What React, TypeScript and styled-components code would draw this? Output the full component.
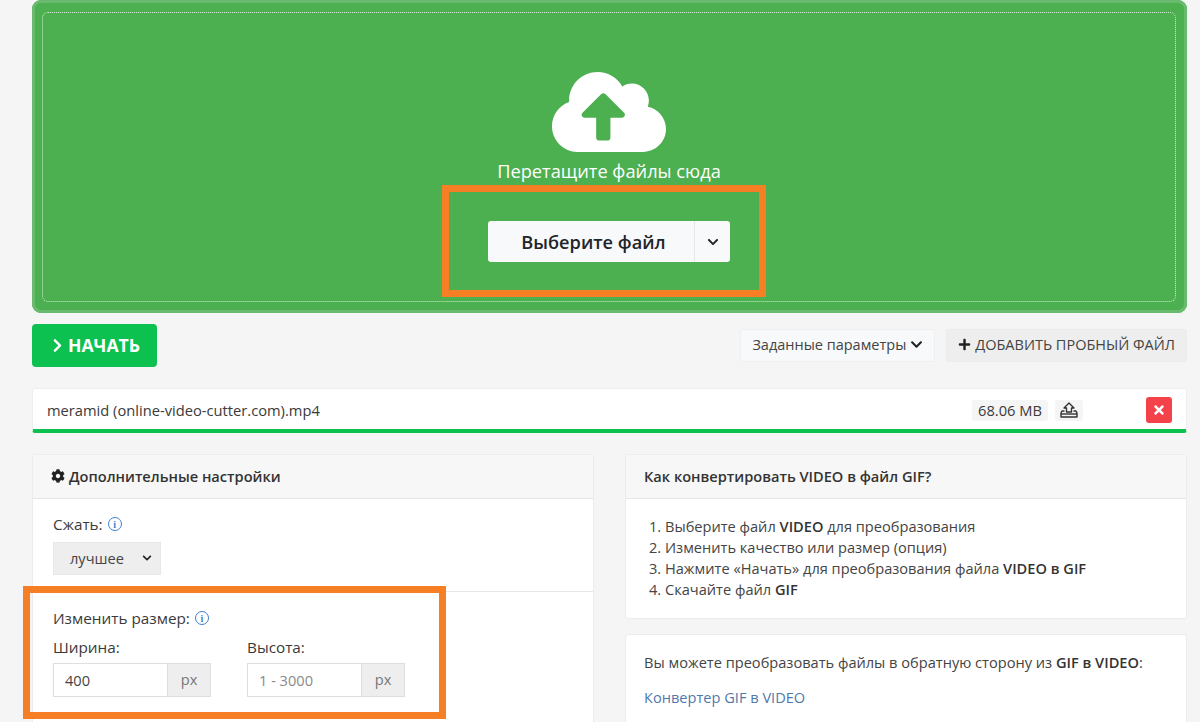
import React from 'react';
import styled, { createGlobalStyle } from 'styled-components';
import { FaChevronDown, FaChevronRight, FaCloudUploadAlt, FaCog, FaPlus, FaTimes } from 'react-icons/fa';

const GlobalStyle = createGlobalStyle`
  html, body {
    margin: 0;
    padding: 0;
    height: 722px;
    overflow: hidden;
    background: #f5f5f5;
    font-family: "Open Sans", "Liberation Sans", sans-serif;
    font-size: 14.6px;
    color: #3a3a3a;
  }
  * { box-sizing: border-box; }
`;

const Page = styled.div`
  position: relative;
  height: 722px;
  overflow: hidden;
  padding: 0 13px 0 32px;
`;

const DropZone = styled.section`
  height: 313px;
  padding: 12px 11px 11px 10px;
  background: #4caf50;
  border-radius: 9px;
  box-shadow: inset 0 0 0 3px #69b96f;
`;

const DropInner = styled.div`
  height: 100%;
  display: flex;
  flex-direction: column;
  align-items: center;
  padding-top: 53px;
  border: 1px dotted #d5ecd6;
  border-radius: 6px;
  color: #fff;
`;

const CloudIcon = styled(FaCloudUploadAlt)`
  font-size: 114px;
  height: 92px;
  color: #fff;
`;

const DropText = styled.div`
  margin-top: 1px;
  font-size: 18.25px;
  line-height: 24px;
`;

const PickGroup = styled.div`
  display: flex;
  height: 41px;
  margin-top: 38px;
  background: #f8f9fa;
  border-radius: 3px;
  color: #212529;
`;

const PickMain = styled.div`
  width: 207px;
  display: flex;
  align-items: center;
  justify-content: center;
  padding-left: 5px;
  font-size: 18.2px;
  font-weight: 600;
  border-right: 1px solid #e4e6e8;
`;

const PickCaret = styled.div`
  flex: 1;
  width: 35px;
  display: flex;
  align-items: center;
  justify-content: center;
  font-size: 12px;
`;

const ActionRow = styled.div`
  display: flex;
  align-items: center;
  margin-top: 11px;
  height: 43px;
  gap: 11px;
`;

const StartButton = styled.div`
  width: 125px;
  height: 43px;
  margin-right: auto;
  display: flex;
  align-items: center;
  gap: 4px;
  padding-left: 18px;
  padding-bottom: 1px;
  background: #0cc14f;
  border-radius: 4px;
  color: #fff;
  font-size: 17.6px;
  font-weight: 700;

  svg { font-size: 15px; margin-top: 1px; margin-right: -1px; }
`;

const GhostButton = styled.div<{ $tone: 'light' | 'grey' }>`
  height: 33px;
  display: flex;
  align-items: center;
  gap: 4px;
  padding: 0 11px 2px;
  border: 1px solid ${({ $tone }) => ($tone === 'light' ? '#eeeff0' : '#ececec')};
  border-radius: 3px;
  background: ${({ $tone }) => ($tone === 'light' ? '#f8f9fa' : '#eeeeee')};
  font-size: 14.5px;
  color: #444;
  white-space: nowrap;

  svg { font-size: 13px; color: #222; }
`;

const FileRow = styled.div`
  height: 45px;
  margin-top: 21px;
  display: flex;
  align-items: center;
  padding: 2px 14px 0 14px;
  background: #fff;
  border: 1px solid #eee;
  border-bottom: 4px solid #0cc14f;
  border-radius: 3px;
  font-size: 14.7px;
`;

const FileName = styled.div`
  margin-right: auto;
`;

const SizeTag = styled.div`
  height: 21px;
  padding: 0 6px;
  display: flex;
  align-items: center;
  background: #f5f5f5;
  border-radius: 3px;
`;

const UploadTag = styled.div`
  width: 28px;
  height: 21px;
  margin-left: 7px;
  display: flex;
  align-items: center;
  justify-content: center;
  background: #f5f5f5;
  border-radius: 3px;

  svg { width: 18px; height: 16px; }
`;

const RemoveButton = styled.div`
  width: 26px;
  height: 26px;
  margin-left: 63px;
  display: flex;
  align-items: center;
  justify-content: center;
  background: #f4424b;
  border-radius: 3px;
  color: #fff;
  font-size: 14px;
`;

const Columns = styled.div`
  display: grid;
  grid-template-columns: 562px 562px;
  gap: 31px;
  margin-top: 21px;
`;

const Column = styled.div`
  display: flex;
  flex-direction: column;
  gap: 15px;
`;

const Card = styled.div<{ $height: number }>`
  height: ${({ $height }) => $height}px;
  background: #fff;
  border: 1px solid #ececec;
  border-radius: 3px;
`;

const CardHeader = styled.div`
  height: 44px;
  display: flex;
  align-items: center;
  gap: 4px;
  padding: 0 18px 2px;
  background: #f7f7f7;
  border-bottom: 1px solid #e6e6e6;
  font-weight: 600;
  color: #333;

  svg { font-size: 14px; color: #222; }
`;

const SettingBlock = styled.div<{ $divided?: boolean }>`
  padding: ${({ $divided }) => ($divided ? '16px 20px 0' : '15px 20px 16px')};
  border-top: ${({ $divided }) => ($divided ? '1px solid #e6e6e6' : 'none')};
`;

const FieldLabel = styled.div`
  display: flex;
  align-items: center;
  gap: 5px;
  height: 20px;
  font-size: 15.3px;
  color: #3a3a3a;
`;

const InfoIcon = styled.span`
  width: 14px;
  height: 14px;
  display: inline-flex;
  align-items: center;
  justify-content: center;
  border: 1.5px solid #3f7fd0;
  border-radius: 50%;
  color: #3f7fd0;
  font-family: "Liberation Serif", serif;
  font-size: 10px;
  font-weight: 700;
`;

const FakeSelect = styled.div`
  width: 108px;
  height: 33px;
  margin-top: 8px;
  display: flex;
  align-items: center;
  justify-content: space-between;
  padding: 0 4px 1px 16px;
  background: #eeeeee;
  border: 1px solid #e8e8e8;
  color: #444;

  svg { font-size: 10px; color: #222; margin-right: 4px; }
`;

const SizeFields = styled.div`
  display: flex;
  gap: 36px;
  margin-top: 9px;
`;

const SizeField = styled.div`
  width: 158px;
`;

const InputGroup = styled.div`
  display: flex;
  height: 34px;
  margin-top: 6px;
  border: 1px solid #dedede;
`;

const InputValue = styled.div<{ $placeholder?: boolean }>`
  flex: 1;
  display: flex;
  align-items: center;
  padding-left: 11px;
  color: ${({ $placeholder }) => ($placeholder ? '#8a8a8a' : '#444')};
`;

const InputUnit = styled.div`
  width: 43px;
  display: flex;
  align-items: center;
  justify-content: center;
  padding-bottom: 3px;
  background: #eeeeee;
  border-left: 1px solid #dedede;
  color: #777;
`;

const Steps = styled.ol`
  margin: 17px 0 0;
  padding: 0 0 0 39px;
  line-height: 21px;
  color: #444;

  b { font-weight: 600; color: #333; }
`;

const Paragraph = styled.p`
  margin: 17px 18px 0;
  line-height: 21px;
  color: #444;

  b { font-weight: 600; color: #333; }
`;

const ConvertLink = styled.a`
  display: block;
  margin: 14px 18px 0;
  line-height: 21px;
  color: #4f79ad;
  text-decoration: none;
`;

// рамки-выделения поверх скриншота
const Highlight = styled.div<{ $left: number; $top: number; $width: number; $height: number }>`
  position: absolute;
  left: ${({ $left }) => $left}px;
  top: ${({ $top }) => $top}px;
  width: ${({ $width }) => $width}px;
  height: ${({ $height }) => $height}px;
  border: 7px solid #f67f26;
  pointer-events: none;
`;

const TrayUpload = () => (
  <svg viewBox="0 0 18 16" fill="none" stroke="#333" strokeWidth="1.4" strokeLinejoin="round">
    <path d="M9 1 L14 6 H11.5 V10 H6.5 V6 H4 Z" />
    <path d="M4.5 9 H2 L1 11 V15 H17 V11 L16 9 H13.5" />
    <path d="M1 12 H17" />
  </svg>
);

export default function App() {
  return (
    <Page>
      <GlobalStyle />
      <DropZone>
        <DropInner>
          <CloudIcon />
          <DropText>Перетащите файлы сюда</DropText>
          <PickGroup>
            <PickMain>Выберите файл</PickMain>
            <PickCaret>
              <FaChevronDown />
            </PickCaret>
          </PickGroup>
        </DropInner>
      </DropZone>

      <ActionRow>
        <StartButton>
          <FaChevronRight /> НАЧАТЬ
        </StartButton>
        <GhostButton $tone="light">
          Заданные параметры <FaChevronDown />
        </GhostButton>
        <GhostButton $tone="grey">
          <FaPlus /> ДОБАВИТЬ ПРОБНЫЙ ФАЙЛ
        </GhostButton>
      </ActionRow>

      <FileRow>
        <FileName>meramid (online-video-cutter.com).mp4</FileName>
        <SizeTag>68.06 MB</SizeTag>
        <UploadTag>
          <TrayUpload />
        </UploadTag>
        <RemoveButton>
          <FaTimes />
        </RemoveButton>
      </FileRow>

      <Columns>
        <Column>
          <Card $height={400}>
            <CardHeader>
              <FaCog /> Дополнительные настройки
            </CardHeader>
            <SettingBlock>
              <FieldLabel>
                Сжать: <InfoIcon>i</InfoIcon>
              </FieldLabel>
              <FakeSelect>
                лучшее <FaChevronDown />
              </FakeSelect>
            </SettingBlock>
            <SettingBlock $divided>
              <FieldLabel>
                Изменить размер: <InfoIcon>i</InfoIcon>
              </FieldLabel>
              <SizeFields>
                <SizeField>
                  <FieldLabel>Ширина:</FieldLabel>
                  <InputGroup>
                    <InputValue>400</InputValue>
                    <InputUnit>px</InputUnit>
                  </InputGroup>
                </SizeField>
                <SizeField>
                  <FieldLabel>Высота:</FieldLabel>
                  <InputGroup>
                    <InputValue $placeholder>1 - 3000</InputValue>
                    <InputUnit>px</InputUnit>
                  </InputGroup>
                </SizeField>
              </SizeFields>
            </SettingBlock>
          </Card>
        </Column>
        <Column>
          <Card $height={165}>
            <CardHeader>Как конвертировать VIDEO в файл GIF?</CardHeader>
            <Steps>
              <li>
                Выберите файл <b>VIDEO</b> для преобразования
              </li>
              <li>Изменить качество или размер (опция)</li>
              <li>
                Нажмите «Начать» для преобразования файла <b>VIDEO в GIF</b>
              </li>
              <li>
                Скачайте файл <b>GIF</b>
              </li>
            </Steps>
          </Card>
          <Card $height={200}>
            <Paragraph>
              Вы можете преобразовать файлы в обратную сторону из <b>GIF в VIDEO</b>:
            </Paragraph>
            <ConvertLink href="#">Конвертер GIF в VIDEO</ConvertLink>
          </Card>
        </Column>
      </Columns>

      <Highlight $left={442} $top={185} $width={324} $height={112} />
      <Highlight $left={23} $top={586} $width={423} $height={133} />
    </Page>
  );
}
